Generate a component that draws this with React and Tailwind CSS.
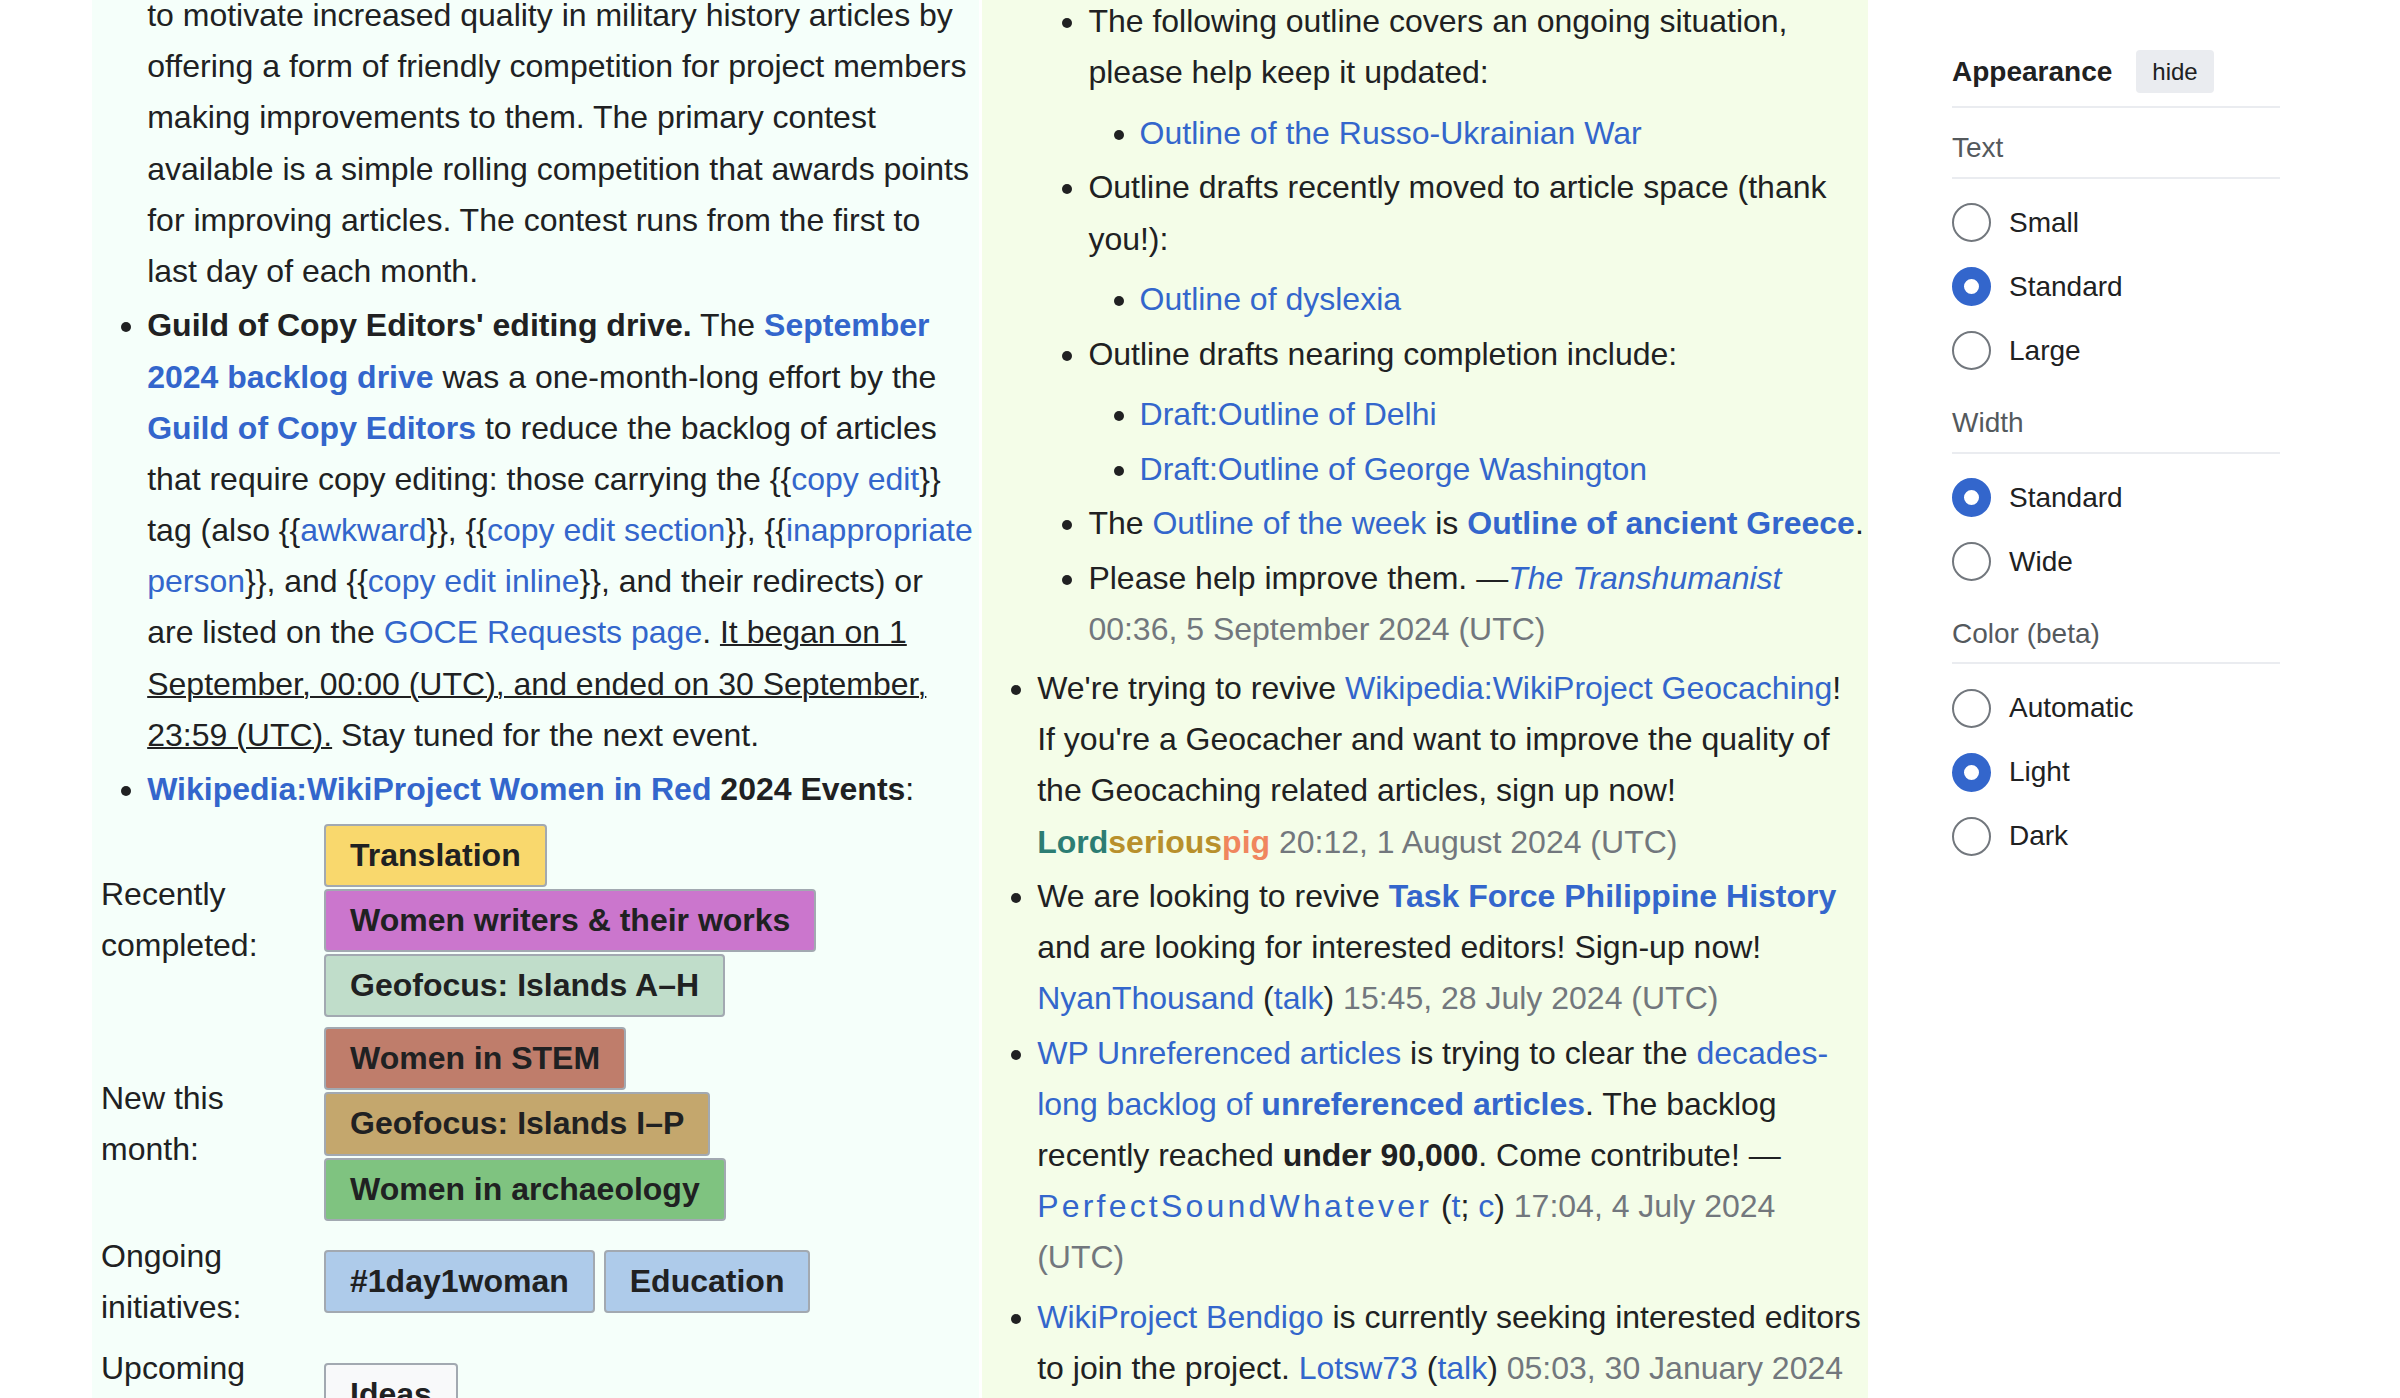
import React from "react";

// links, timestamps and coloured event boxes used throughout the board
function A({ children, bold, italic }) {
	let cls = "text-[#3366cc]";
	if (bold) cls += " font-bold";
	if (italic) cls += " italic";
	return (
		<a href="#" className={cls}>
			{children}
		</a>
	);
}

function Stamp({ children }) {
	return <span className="text-[#72777d]">{children}</span>;
}

function Tag({ color, children }) {
	return (
		<span
			className={`inline-block border-2 border-[#a2a9b1] rounded-[4px] px-[24px] py-[4px] font-bold ${color}`}
		>
			{children}
		</span>
	);
}

function EventRow({ label, children }) {
	return (
		<div className="flex items-center">
			<div className="w-[223px] shrink-0 p-[5px]">{label}</div>
			<div className="flex-1 p-[5px] flex flex-wrap gap-x-[9px] gap-y-[2px]">
				{children}
			</div>
		</div>
	);
}

function Radio({ label, checked }) {
	return (
		<div className="flex items-center h-[64px] gap-[18px]">
			<span
				className={
					checked
						? "w-[39px] h-[39px] rounded-full border-[12px] border-[#3366cc] bg-white"
						: "w-[39px] h-[39px] rounded-full border-2 border-[#72777d] bg-white"
				}
			></span>
			<span>{label}</span>
		</div>
	);
}

function Section({ title, options, selected }) {
	return (
		<div>
			<div className="mt-[18px] leading-[44.8px] pb-[6px] border-b-2 border-[#eaecf0] text-[#54595d]">
				{title}
			</div>
			<div className="mt-[12px]">
				{options.map((o) => (
					<Radio key={o} label={o} checked={o === selected} />
				))}
			</div>
		</div>
	);
}

export default function App() {
	return (
		<div className="h-[1398px] w-[2400px] overflow-hidden bg-white flex pl-[92px] font-['Liberation_Sans',Arial,Helvetica,sans-serif] text-[#202122]">
			{/* Left column: contests and drives */}
			<div className="w-[887px] shrink-0 bg-[#f5fffa] pl-[4px] pr-[5px] overflow-hidden text-[32px] leading-[1.6]">
				<ul className="list-disc ml-[51.2px] -mt-[10px]">
					<li className="list-none mb-[3.2px]">
						to motivate increased quality in military history articles by
						offering a form of friendly competition for project members making
						improvements to them. The primary contest available is a simple
						rolling competition that awards points for improving articles. The
						contest runs from the first to last day of each month.
					</li>
					<li className="mb-[3.2px]">
						<b>Guild of Copy Editors' editing drive.</b> The{" "}
						<A bold>September 2024 backlog drive</A> was a one-month-long effort
						by the <A bold>Guild of Copy Editors</A> to reduce the backlog of
						articles that require copy editing: those carrying the {"{{"}
						<A>copy edit</A>
						{"}}"} tag (also {"{{"}
						<A>awkward</A>
						{"}}"}, {"{{"}
						<A>copy edit section</A>
						{"}}"}, {"{{"}
						<A>inappropriate person</A>
						{"}}"}, and {"{{"}
						<A>copy edit inline</A>
						{"}}"}, and their redirects) or are listed on the{" "}
						<A>GOCE Requests page</A>.{" "}
						<u className="underline decoration-2">
							It began on 1 September, 00:00 (UTC), and ended on 30 September,
							23:59 (UTC).
						</u>{" "}
						Stay tuned for the next event.
					</li>
					<li className="mb-[3.2px]">
						<A bold>Wikipedia:WikiProject Women in Red</A> <b>2024 Events</b>:
					</li>
				</ul>
				<div>
					<EventRow label="Recently completed:">
						<Tag color="bg-[#f9d86d]">Translation</Tag>
						<Tag color="bg-[#cb76cd]">Women writers &amp; their works</Tag>
						<Tag color="bg-[#c0ddca]">Geofocus: Islands A–H</Tag>
					</EventRow>
					<EventRow label="New this month:">
						<Tag color="bg-[#bf7d6b]">Women in STEM</Tag>
						<Tag color="bg-[#c4a76d]">Geofocus: Islands I–P</Tag>
						<Tag color="bg-[#7fc380]">Women in archaeology</Tag>
					</EventRow>
					<EventRow label="Ongoing initiatives:">
						<Tag color="bg-[#aecbea]">#1day1woman</Tag>
						<Tag color="bg-[#aecbea]">Education</Tag>
					</EventRow>
					<EventRow label="Upcoming events:">
						<Tag color="bg-[#f8f9fa]">Ideas</Tag>
					</EventRow>
				</div>
			</div>

			{/* Right column: outlines and revivals */}
			<div className="w-[886px] shrink-0 ml-[3px] bg-[#f4fde8] pl-[4px] pr-[4px] overflow-hidden text-[32px] leading-[1.6]">
				<ul className="list-disc ml-[51.2px] -mt-[4px]">
					<li className="list-none mb-[8px]">
						<ul className="list-disc ml-[51.2px]">
							<li className="mb-[3.2px]">
								The following outline covers an ongoing situation, please help
								keep it updated:
								<ul className="list-disc ml-[51.2px] mt-[9.6px]">
									<li className="mb-[3.2px]">
										<A>Outline of the Russo-Ukrainian War</A>
									</li>
								</ul>
							</li>
							<li className="mb-[3.2px]">
								Outline drafts recently moved to article space (thank you!):
								<ul className="list-disc ml-[51.2px] mt-[9.6px]">
									<li className="mb-[3.2px]">
										<A>Outline of dyslexia</A>
									</li>
								</ul>
							</li>
							<li className="mb-[3.2px]">
								Outline drafts nearing completion include:
								<ul className="list-disc ml-[51.2px] mt-[9.6px]">
									<li className="mb-[3.2px]">
										<A>Draft:Outline of Delhi</A>
									</li>
									<li className="mb-[3.2px]">
										<A>Draft:Outline of George Washington</A>
									</li>
								</ul>
							</li>
							<li className="mb-[3.2px]">
								The <A>Outline of the week</A> is{" "}
								<A bold>Outline of ancient Greece</A>.
							</li>
							<li className="mb-[3.2px]">
								Please help improve them. —
								<A italic>The Transhumanist</A>{" "}
								<Stamp>00:36, 5 September 2024 (UTC)</Stamp>
							</li>
						</ul>
					</li>
					<li className="mb-[3.2px]">
						We're trying to revive <A>Wikipedia:WikiProject Geocaching</A>! If
						you're a Geocacher and want to improve the quality of the Geocaching
						related articles, sign up now!{" "}
						<b>
							<span className="text-[#2c7d73]">Lord</span>
							<span className="text-[#b8902c]">serious</span>
							<span className="text-[#f0865e]">pig</span>
						</b>{" "}
						<Stamp>20:12, 1 August 2024 (UTC)</Stamp>
					</li>
					<li className="mb-[3.2px]">
						We are looking to revive <A bold>Task Force Philippine History</A>{" "}
						and are looking for interested editors! Sign-up now!{" "}
						<A>NyanThousand</A> (<A>talk</A>){" "}
						<Stamp>15:45, 28 July 2024 (UTC)</Stamp>
					</li>
					<li className="mb-[8px]">
						<A>WP Unreferenced articles</A> is trying to clear the{" "}
						<A>
							decades-long backlog of <b>unreferenced articles</b>
						</A>
						. The backlog recently reached <b>under 90,000</b>. Come contribute!
						—{" "}
						<a href="#" className="text-[#3366cc] tracking-[0.1em]">
							PerfectSoundWhatever
						</a>{" "}
						(<A>t</A>; <A>c</A>) <Stamp>17:04, 4 July 2024 (UTC)</Stamp>
					</li>
					<li className="mb-[3.2px]">
						<A>WikiProject Bendigo</A> is currently seeking interested editors to
						join the project. <A>Lotsw73</A> (<A>talk</A>){" "}
						<Stamp>05:03, 30 January 2024 (UTC)</Stamp>
					</li>
				</ul>
			</div>

			{/* Appearance sidebar */}
			<div className="ml-[84px] w-[328px] shrink-0 pt-[50px] text-[28px]">
				<div className="flex items-center gap-[24px] pb-[13px] border-b-2 border-[#eaecf0]">
					<span className="font-bold">Appearance</span>
					<button className="h-[43px] px-[16px] bg-[#eaecf0] rounded-[4px] text-[24px] text-[#202122]">
						hide
					</button>
				</div>
				<Section
					title="Text"
					options={["Small", "Standard", "Large"]}
					selected="Standard"
				/>
				<Section title="Width" options={["Standard", "Wide"]} selected="Standard" />
				<Section
					title="Color (beta)"
					options={["Automatic", "Light", "Dark"]}
					selected="Light"
				/>
			</div>
		</div>
	);
}
